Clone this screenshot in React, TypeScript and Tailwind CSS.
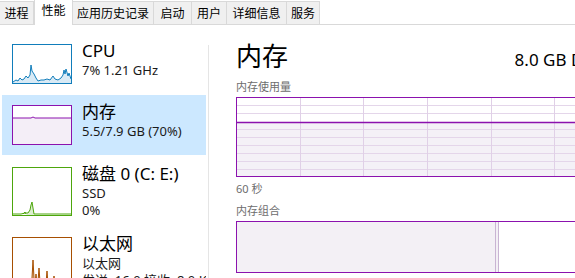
import type { ReactNode } from 'react'

const tabs = [
  { label: '进程', w: 'w-[34px]' },
  { label: '性能', w: 'w-[39px]', active: true },
  { label: '应用历史记录', w: 'w-[81px]' },
  { label: '启动', w: 'w-[38px]' },
  { label: '用户', w: 'w-[35px]' },
  { label: '详细信息', w: 'w-[60px]' },
  { label: '服务', w: 'w-[33px]' },
]

function CpuThumb() {
  const pts =
    '0,37 3,35 5,36 7,33 9,35 11,34 13,31 15,33 17,30 18,20 19,26 21,29 23,33 25,36 28,35 31,35 34,34 37,35 40,31 42,34 45,35 48,33 50,30 51,25 52,29 53,24 55,31 56,28 58,34 60,35'
  return (
    <div className="w-[60px] h-[40px] border border-[#117dbb] bg-white">
      <svg width="58" height="38" className="block">
        <polygon points={`0,38 ${pts} 60,38`} fill="#d9eaf5" />
        <polyline points={pts} fill="none" stroke="#117dbb" strokeWidth="1" />
      </svg>
    </div>
  )
}

function MemThumb() {
  return (
    <div className="w-[60px] h-[40px] border border-[#8b12ae] bg-white">
      <svg width="58" height="38" className="block">
        <rect x="0" y="12" width="58" height="26" fill="#f4eef7" />
        <polyline points="0,12 18,12 20,11 22,12 58,12" fill="none" stroke="#8b12ae" strokeWidth="1" />
      </svg>
    </div>
  )
}

function DiskThumb() {
  return (
    <div className="w-[60px] h-[49px] border border-[#4da60c] bg-white">
      <svg width="58" height="47" className="block">
        <polygon points="13,47 15,45 17,42 18,37 19,34 20,40 21,47" fill="#dbeecf" />
        <polyline points="0,46 8,46 12,45 15,45 17,42 18,37 19,34 20,40 21,46 30,46 58,46" fill="none" stroke="#4da60c" strokeWidth="1" />
        <polyline points="10,46 12,44 13,46" fill="none" stroke="#4da60c" strokeWidth="1" />
      </svg>
    </div>
  )
}

function NetThumb() {
  const spikes = [
    [20, 22],
    [23, 36],
    [26, 30],
    [30, 40],
    [34, 33],
    [38, 44],
    [41, 38],
    [47, 48],
  ]
  return (
    <div className="w-[60px] h-[60px] border border-[#a74f01] bg-white">
      <svg width="58" height="58" className="block">
        {spikes.map(([x, top]) => (
          <g key={x}>
            <polygon points={`${x - 2},58 ${x},${top} ${x + 2},58`} fill="#eccaa6" />
            <polyline points={`${x - 2},58 ${x},${top} ${x + 2},58`} fill="none" stroke="#a74f01" strokeWidth="1" />
          </g>
        ))}
        <line x1="13" y1="46.5" x2="18" y2="46.5" stroke="#d08a4a" strokeDasharray="1 1" />
        <line x1="13" y1="49.5" x2="18" y2="49.5" stroke="#d08a4a" strokeDasharray="1 1" />
        <line x1="13" y1="52.5" x2="18" y2="52.5" stroke="#d08a4a" strokeDasharray="1 1" />
      </svg>
    </div>
  )
}

function Item({
  thumb,
  title,
  lines,
  active,
  h,
}: {
  thumb: ReactNode
  title: string
  lines: string[]
  active?: boolean
  h: string
}) {
  return (
    <div className={`${h} shrink-0 ml-[2px] w-[204px] overflow-hidden flex pl-[10px] pt-[10px] ${active ? 'bg-[#cce8ff]' : ''}`}>
      <div className="shrink-0">{thumb}</div>
      <div className="ml-[10px] -mt-[4px] whitespace-nowrap">
        <div className="text-[17px] leading-[22px] text-black">{title}</div>
        {lines.map((l) => (
          <div key={l} className="text-[13px] leading-[17px] text-[#1a1a1a]">
            {l}
          </div>
        ))}
      </div>
    </div>
  )
}

function UsageGraph() {
  const vs = [63, 126, 190, 254, 317]
  const hs = [7, 15, 31, 39, 47, 55, 63, 71]
  return (
    <div className="w-[380px] h-[80px] border border-[#8b12ae] bg-white">
      <svg width="378" height="78" className="block">
        <rect x="0" y="24" width="378" height="54" fill="#f4f1f7" />
        {hs.map((y) => (
          <line key={y} x1="0" y1={y + 0.5} x2="378" y2={y + 0.5} stroke="#e4d6ea" strokeWidth="1" />
        ))}
        {vs.map((x) => (
          <line key={x} x1={x + 0.5} y1="0" x2={x + 0.5} y2="78" stroke="#e0d0e7" strokeWidth="1" />
        ))}
        <line x1="0" y1="24.5" x2="378" y2="24.5" stroke="#8b12ae" strokeWidth="1.5" />
      </svg>
    </div>
  )
}

function CompositionBar() {
  return (
    <div className="w-[380px] h-[52px] border border-[#8b12ae] bg-white flex">
      <div className="w-[258px] h-full bg-[#f3f0f5]" />
      <div className="w-px h-full bg-[#c9b4d3]" />
      <div className="w-[2px] h-full bg-[#f3f0f5]" />
      <div className="w-px h-full bg-[#c9b4d3]" />
    </div>
  )
}

export default function App() {
  return (
    <div className="w-[575px] h-[278px] overflow-hidden bg-white font-['Noto_Sans','Noto_Sans_CJK_SC',sans-serif]">
      <div className="h-[25px] flex items-end border-b border-[#d9d9d9]">
        {tabs.map((t) =>
          t.active ? (
            <div
              key={t.label}
              className={`${t.w} h-[26px] -mb-px bg-white border-x border-t border-[#d9d9d9] flex justify-center pt-[2px] text-[12px] leading-[18px] text-black`}
            >
              {t.label}
            </div>
          ) : (
            <div
              key={t.label}
              className={`${t.w} h-[23px] bg-[#f0f0f0] border-t border-r border-[#d9d9d9] flex justify-center pt-[3px] text-[12px] leading-[18px] text-black`}
            >
              {t.label}
            </div>
          ),
        )}
      </div>

      <div className="flex h-[253px] overflow-hidden">
        <div className="w-[208px] shrink-0 flex flex-col gap-[2px] pt-[9px]">
          <Item h="h-[59px]" thumb={<CpuThumb />} title="CPU" lines={['7% 1.21 GHz']} />
          <Item h="h-[60px]" thumb={<MemThumb />} title="内存" lines={['5.5/7.9 GB (70%)']} active />
          <Item h="h-[68px]" thumb={<DiskThumb />} title="磁盘 0 (C: E:)" lines={['SSD', '0%']} />
          <Item h="h-[80px]" thumb={<NetThumb />} title="以太网" lines={['以太网', '发送: 16.0  接收: 8.0 Kbps']} />
        </div>
        <div className="w-px shrink-0 bg-[#e5e5e5] mt-[20px]" />

        <div className="pl-[27px] pt-[13px] w-[420px] shrink-0">
          <div className="flex items-end w-[380px]">
            <div className="text-[26px] leading-[36px] text-black">内存</div>
            <div className="ml-auto mb-[3px] text-[17px] leading-[22px] text-black whitespace-nowrap">8.0 GB DDR3</div>
          </div>
          <div className="mt-[6px] text-[11px] leading-[14px] text-[#6d6d6d]">内存使用量</div>
          <div className="mt-[3px]">
            <UsageGraph />
          </div>
          <div className="mt-[5px] text-[11px] leading-[14px] text-[#6d6d6d]">60 秒</div>
          <div className="mt-[8px] text-[11px] leading-[14px] text-[#6d6d6d]">内存组合</div>
          <div className="mt-[3px]">
            <CompositionBar />
          </div>
        </div>
      </div>
    </div>
  )
}
